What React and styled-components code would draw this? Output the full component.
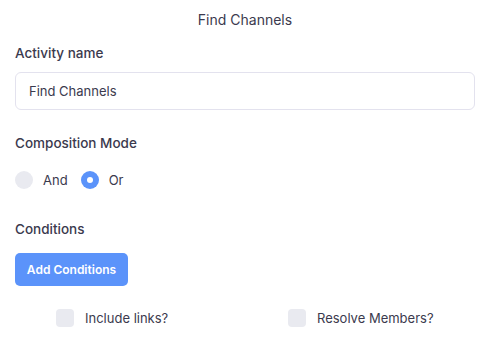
import styled, { createGlobalStyle } from "styled-components";

const GlobalStyle = createGlobalStyle`
  html, body {
    margin: 0;
    padding: 0;
    background: #fff;
  }
  body {
    font-family: Inter, "Open Sans", sans-serif;
    color: #3b3a4e;
  }
`;

const Panel = styled.div`
  width: 489px;
  height: 340px;
  box-sizing: border-box;
  padding: 11px 14px 0 15px;
`;

const Title = styled.h2`
  margin: 0;
  font-size: 14px;
  font-weight: 400;
  text-align: center;
  line-height: 18px;
  color: #3b3a4e;
`;

const Section = styled.div`
  margin-top: ${(p) => p.$top || 0}px;
`;

const Label = styled.div`
  font-size: 13.5px;
  font-weight: 500;
  line-height: 18px;
  color: #3b3a4e;
`;

const Input = styled.input`
  display: block;
  box-sizing: border-box;
  width: 100%;
  height: 38px;
  margin-top: 10px;
  padding: 0 13px;
  border: 1px solid #e3e2ee;
  border-radius: 6px;
  font-family: inherit;
  font-size: 13px;
  color: #3b3a4e;
  outline: none;
`;

const RadioRow = styled.div`
  display: flex;
  align-items: center;
  gap: 13px;
  margin-top: 19px;
`;

const RadioOption = styled.label`
  display: flex;
  align-items: center;
  gap: 10px;
  font-size: 13px;
  color: #3b3a4e;
`;

const RadioDot = styled.span`
  width: 18px;
  height: 18px;
  border-radius: 50%;
  background: ${(p) => (p.$on ? "#5b93fa" : "#e9eaf0")};
  display: flex;
  align-items: center;
  justify-content: center;

  &::after {
    content: "";
    display: ${(p) => (p.$on ? "block" : "none")};
    width: 6px;
    height: 6px;
    border-radius: 50%;
    background: #fff;
  }
`;

const Button = styled.button`
  margin-top: 15px;
  height: 33px;
  width: 113px;
  border: none;
  border-radius: 5px;
  background: #5b93fa;
  color: #fff;
  font-family: inherit;
  font-size: 12px;
  font-weight: 600;
  cursor: pointer;
`;

const CheckGrid = styled.div`
  display: grid;
  grid-template-columns: 232px 1fr;
  margin-top: 23px;
  padding-left: 41px;
`;

const CheckOption = styled.label`
  display: flex;
  align-items: center;
  gap: 11px;
  font-size: 13px;
  color: #3b3a4e;
`;

const Box = styled.span`
  width: 18px;
  height: 18px;
  border-radius: 4px;
  background: #e9eaf0;
`;

export default function App() {
  return (
    <>
      <GlobalStyle />
      <Panel>
        <Title>Find Channels</Title>

        <Section $top={15}>
          <Label>Activity name</Label>
          <Input defaultValue="Find Channels" />
        </Section>

        <Section $top={24}>
          <Label>Composition Mode</Label>
          <RadioRow>
            <RadioOption>
              <RadioDot />
              And
            </RadioOption>
            <RadioOption>
              <RadioDot $on />
              Or
            </RadioOption>
          </RadioRow>
        </Section>

        <Section $top={31}>
          <Label>Conditions</Label>
          <Button>Add Conditions</Button>
        </Section>

        <CheckGrid>
          <CheckOption>
            <Box />
            Include links?
          </CheckOption>
          <CheckOption>
            <Box />
            Resolve Members?
          </CheckOption>
        </CheckGrid>
      </Panel>
    </>
  );
}
